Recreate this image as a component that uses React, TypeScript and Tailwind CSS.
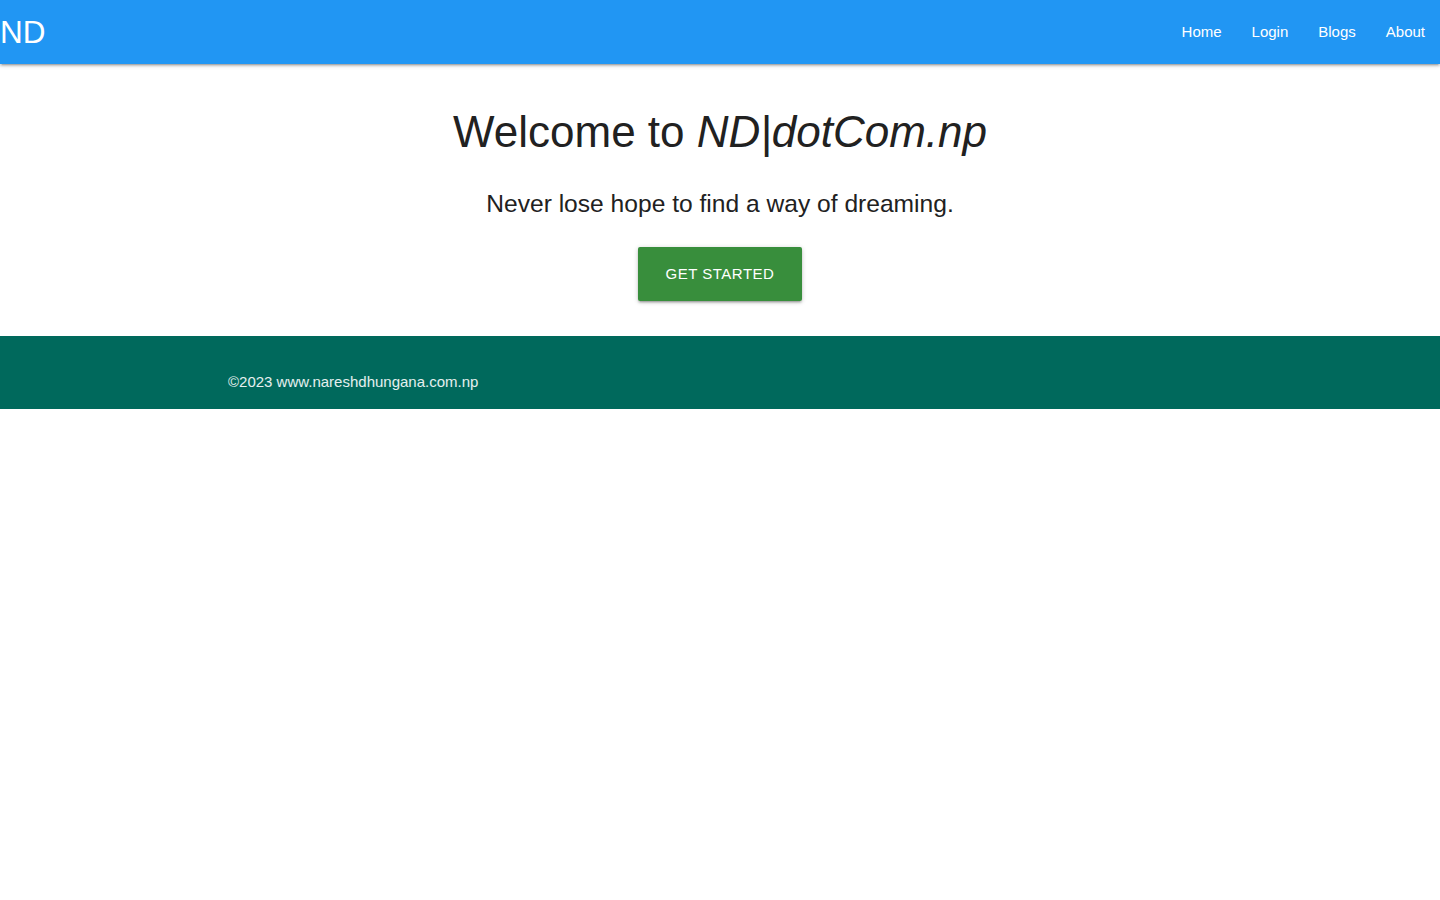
export default function App() {
    return (
        <div className="min-h-screen bg-white font-['Liberation_Sans',Arial,sans-serif] text-[#212121]">
            <Header />
            <main className="text-center pt-[44px] pb-[35px]">
                <h3 className="text-[44px] leading-[1.1] font-normal">
                    Welcome to <i>ND|dotCom.np</i>
                </h3>
                <h5 className="mt-[34px] text-[24.6px] leading-[1.1] font-normal">
                    Never lose hope to find a way of dreaming.
                </h5>
                <div className="mt-[30px] flex justify-center">
                    <a
                        href="#"
                        className="h-[54px] px-[28px] flex items-center bg-[#388e3c] text-white text-[15px] tracking-[0.5px] uppercase rounded-[2px] shadow-[0_2px_2px_0_rgba(0,0,0,0.14),0_3px_1px_-2px_rgba(0,0,0,0.12),0_1px_5px_0_rgba(0,0,0,0.2)]"
                    >
                        Get Started
                    </a>
                </div>
            </main>
            <footer className="bg-[#00695c] h-[73px] flex items-end">
                <div className="w-[70%] mx-auto px-3 pb-[16px] text-[15px] text-white/90">
                    ©2023 www.nareshdhungana.com.np
                </div>
            </footer>
        </div>
    );
}

function Header() {
    return (
        <nav className="h-16 bg-[#2196f3] text-white flex items-center justify-between shadow-[0_2px_2px_0_rgba(0,0,0,0.14),0_3px_1px_-2px_rgba(0,0,0,0.12),0_1px_5px_0_rgba(0,0,0,0.2)] relative">
            <a href="#" className="text-[31.5px] leading-none pt-[2px]">
                ND
            </a>
            <ul className="flex">
                {["Home", "Login", "Blogs", "About"].map((item) => (
                    <li key={item}>
                        <a href="#" className="block px-[15px] text-[15px] leading-[64px]">
                            {item}
                        </a>
                    </li>
                ))}
            </ul>
        </nav>
    );
}
